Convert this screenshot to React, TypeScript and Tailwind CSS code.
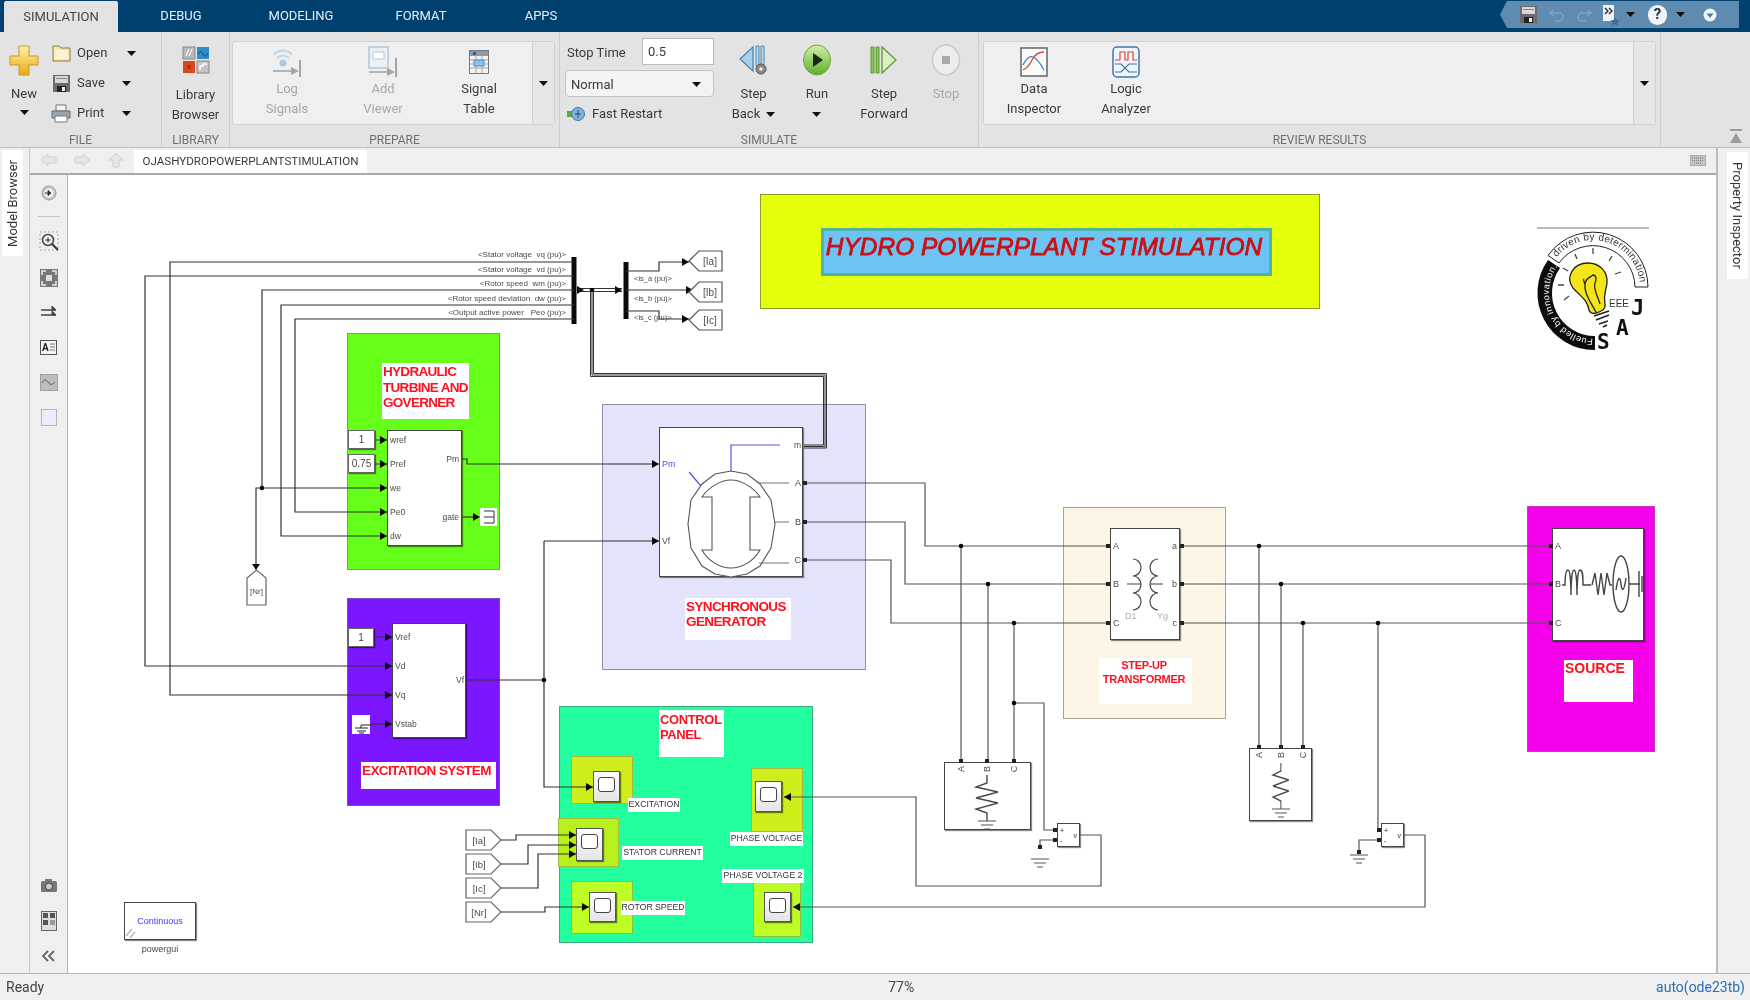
import React from "react";

const OX = 68;
const OY = 175;

// canvas nodes keep the picture's page coordinates, converted here
const at = (x: number, y: number, w: number, h: number): React.CSSProperties => ({
  left: x - OX,
  top: y - OY,
  width: w,
  height: h,
});

const Caret = ({ className = "" }: { className?: string }) => (
  <svg width="9" height="5" viewBox="0 0 9 5" className={className}>
    <path d="M0 0h9L4.500 5z" fill="#111" />
  </svg>
);

/* ribbon icons */
const NewIcon = () => (
  <svg width="30" height="32" viewBox="0 0 30 32">
    <defs>
      <linearGradient id="ng" x1="0" y1="0" x2="0" y2="1">
        <stop offset="0" stopColor="#fff3a0" />
        <stop offset="1" stopColor="#e8a818" />
      </linearGradient>
    </defs>
    <path d="M10 2h10v10h9v9h-9v10H10V21H1v-9h9z" fill="url(#ng)" stroke="#c99a2a" />
  </svg>
);
const OpenIcon = () => (
  <svg width="19" height="19" viewBox="0 0 19 19">
    <path d="M1 2h6l2 2h9v13H1z" fill="#f4e6ae" stroke="#8a7a4a" />
    <path d="M3 6h13v9H3z" fill="#fbf3cf" />
  </svg>
);
const SaveIcon = ({ size = 19 }: { size?: number }) => (
  <svg width={size} height={size} viewBox="0 0 19 19">
    <path d="M1 1h17v17H1z" fill="#6b6b6b" />
    <path d="M3 2h13v7H3z" fill="#d8d8d8" />
    <path d="M4 4h11v1H4z" fill="#888" />
    <path d="M5 12h9v6H5z" fill="#222" />
    <path d="M10 13h3v4h-3z" fill="#eee" />
  </svg>
);
const PrintIcon = () => (
  <svg width="20" height="19" viewBox="0 0 20 19">
    <path d="M5 1h10v6H5z" fill="#f4f4f4" stroke="#777" />
    <path d="M1 7h18v7H1z" fill="#9aa5ae" stroke="#66707a" />
    <path d="M4 12h12v6H4z" fill="#fff" stroke="#777" />
  </svg>
);
const LibraryIcon = () => (
  <svg width="28" height="28" viewBox="0 0 28 28">
    <rect x="1" y="1" width="12" height="12" fill="#b9b9b9" stroke="#888" />
    <path d="M4 10l3-7M7 10l3-7" stroke="#fff" />
    <rect x="15" y="1" width="12" height="12" fill="#2f8fc4" />
    <path d="M16 8q3-5 5 0t5-1" stroke="#0b4f7c" fill="none" />
    <rect x="1" y="15" width="12" height="12" fill="#d8481c" />
    <rect x="5" y="19" width="4" height="4" fill="#b33510" />
    <rect x="15" y="15" width="12" height="12" fill="#c4c4c4" stroke="#888" />
    <path d="M18 24v-4h3v-2h4" stroke="#fff" fill="none" strokeWidth="1.5" />
  </svg>
);
const LogIcon = () => (
  <svg width="30" height="32" viewBox="0 0 30 32">
    <circle cx="11" cy="17" r="3.500" fill="#a9cbe6" />
    <path d="M5 12q6-5 12 0M2 8q9-7 18 0" stroke="#bcd6ea" strokeWidth="2" fill="none" />
    <path d="M1 25h18" stroke="#b5b5b5" strokeWidth="2" />
    <path d="M19 21l8 4-8 4z" fill="#a5a5a5" />
    <path d="M28 14v17" stroke="#a5a5a5" strokeWidth="2" />
  </svg>
);
const ViewerIcon = () => (
  <svg width="30" height="32" viewBox="0 0 30 32">
    <rect x="1" y="1" width="19" height="21" fill="#e9f0f6" stroke="#b5c8d8" strokeWidth="1.500" />
    <rect x="5" y="6" width="11" height="7" rx="1" fill="#fff" stroke="#b8c4cc" />
    <path d="M1 26h18" stroke="#b5b5b5" strokeWidth="2" />
    <path d="M19 22l8 4-8 4z" fill="#a5a5a5" />
    <path d="M28 12v19" stroke="#a5a5a5" strokeWidth="2" />
  </svg>
);
const TableIcon = () => (
  <svg width="20" height="24" viewBox="0 0 20 24">
    <rect x="0.500" y="0.500" width="19" height="23" fill="#f2f2f2" stroke="#777" />
    <rect x="1" y="1" width="18" height="5" fill="#8d99a3" />
    <rect x="4" y="2" width="3" height="3" fill="#1d5fa8" />
    <path d="M1 10h18M1 14h18M1 18h18M7 6v17M13 6v17" stroke="#aaa" />
    <rect x="5" y="10" width="10" height="6" fill="#8ec1ee" stroke="#4d8fcb" />
  </svg>
);
const StepBackIcon = () => (
  <svg width="30" height="32" viewBox="0 0 30 32">
    <path d="M14 3v24L1 15z" fill="#a9d0ec" stroke="#4b86b4" strokeWidth="1.300" />
    <path d="M17 2h3v20h-3zM22 2h3v20h-3z" fill="#b9d6ea" stroke="#4b86b4" />
    <circle cx="22" cy="25" r="5" fill="#8a8a8a" stroke="#555" />
    <circle cx="22" cy="25" r="1.800" fill="#eee" />
  </svg>
);
const RunIcon = () => (
  <svg width="30" height="34" viewBox="0 0 30 34">
    <defs>
      <linearGradient id="rg" x1="0" y1="0" x2="0" y2="1">
        <stop offset="0" stopColor="#d4eea8" />
        <stop offset="1" stopColor="#5fae2c" />
      </linearGradient>
    </defs>
    <ellipse cx="15" cy="17" rx="13.500" ry="15" fill="url(#rg)" stroke="#6aa83a" />
    <path d="M11 10l10 7-10 7z" fill="#1c2a12" />
  </svg>
);
const StepFwdIcon = () => (
  <svg width="28" height="30" viewBox="0 0 28 30">
    <path d="M1 2h3v26H1zM6 2h3v26H6z" fill="#8cc65a" stroke="#5d9a34" />
    <path d="M12 2v26l14-13z" fill="#dcefc6" stroke="#5d9a34" strokeWidth="1.300" />
  </svg>
);
const StopIcon = () => (
  <svg width="30" height="34" viewBox="0 0 30 34">
    <ellipse cx="15" cy="17" rx="13.500" ry="15" fill="#ededed" stroke="#c9c9c9" strokeWidth="1.500" />
    <rect x="11" y="13" width="8" height="8" fill="#a8a8a8" />
  </svg>
);
const DataIcon = () => (
  <svg width="28" height="30" viewBox="0 0 28 30">
    <rect x="1" y="1" width="26" height="28" fill="#fafafa" stroke="#666" strokeWidth="1.500" />
    <path d="M3 23q5-2 9-10t12-8" stroke="#d8483a" fill="none" strokeWidth="1.300" />
    <path d="M3 18q5-10 10-8t11 13" stroke="#3c7fc4" fill="none" strokeWidth="1.300" />
  </svg>
);
const LogicIcon = () => (
  <svg width="28" height="32" viewBox="0 0 28 32">
    <rect x="1" y="1" width="26" height="30" rx="4" fill="#eef4fa" stroke="#3f78ad" strokeWidth="1.500" />
    <path d="M3 14h5V6h5v8h3V6h5v8h4" stroke="#d8483a" fill="none" strokeWidth="1.200" />
    <path d="M3 18h6l8 8h8M3 26h6l8-8h8" stroke="#3f78ad" fill="none" strokeWidth="1.200" />
  </svg>
);
const FastIcon = () => (
  <svg width="18" height="16" viewBox="0 0 18 16">
    <path d="M0 5h6v6H0z" fill="#5fa83c" />
    <circle cx="11" cy="8" r="6.500" fill="#7fb2d8" stroke="#3f78ad" />
    <path d="M11 4v8M8 8h6" stroke="#1f4f78" />
  </svg>
);

const SmallBtn = ({ icon, label, caretGap }: { icon: React.ReactNode; label: string; caretGap: string }) => (
  <div className="flex h-[30px] items-center">
    <div className="flex w-[24px] justify-center">{icon}</div>
    <span className="ml-[4px] w-[38px]">{label}</span>
    <Caret className={caretGap} />
  </div>
);

const Stack = ({ icon, lines, gray = false }: { icon: React.ReactNode; lines: string[]; gray?: boolean }) => (
  <div className={`flex w-[92px] flex-col items-center ${gray ? "text-[#a8a8a8]" : ""}`}>
    <div className="flex h-[32px] items-center">{icon}</div>
    <div className="mt-[1px] text-center leading-[20px]">
      {lines.map((l) => (
        <div key={l}>{l}</div>
      ))}
    </div>
  </div>
);

const SimBtn = ({ w, icon, lines, gray = false }: { w: string; icon: React.ReactNode; lines: React.ReactNode[]; gray?: boolean }) => (
  <div className={`flex flex-col items-center ${w} ${gray ? "text-[#a8a8a8]" : ""}`}>
    <div className="flex h-[36px] items-center">{icon}</div>
    <div className="mt-[6px] text-center leading-[20px]">
      {lines.map((l, i) => (
        <div key={i} className="flex h-[20px] items-center justify-center gap-[6px]">
          {l}
        </div>
      ))}
    </div>
  </div>
);

const Section = ({ w, label, children }: { w: string; label: string; children: React.ReactNode }) => (
  <section className={`flex shrink-0 flex-col border-r border-[#cdcdcd] ${w}`}>
    <div className="h-[100px]">{children}</div>
    <div className="h-[15px] text-center text-[12px] leading-[17px] text-[#6f6f6f]">{label}</div>
  </section>
);

const Ribbon = () => (
  <div className="flex h-[116px] shrink-0 border-b border-[#bdbdbd] bg-[#e3e3e3] text-[13px] text-[#3a3a3a]">
    <Section w="w-[162px]" label="FILE">
      <div className="flex">
        <div className="ml-[8px] flex w-[32px] flex-col items-center pt-[12px]">
          <NewIcon />
          <div className="mt-[8px] leading-[20px]">New</div>
          <Caret className="mt-[6px]" />
        </div>
        <div className="ml-[9px] pt-[6px]">
          <SmallBtn icon={<OpenIcon />} label="Open" caretGap="ml-[12px]" />
          <SmallBtn icon={<SaveIcon />} label="Save" caretGap="ml-[7px]" />
          <SmallBtn icon={<PrintIcon />} label="Print" caretGap="ml-[7px]" />
        </div>
      </div>
    </Section>
    <Section w="w-[68px]" label="LIBRARY">
      <div className="flex flex-col items-center pt-[14px]">
        <LibraryIcon />
        <div className="mt-[11px] text-center leading-[20px]">
          Library
          <br />
          Browser
        </div>
      </div>
    </Section>
    <Section w="w-[330px]" label="PREPARE">
      <div className="ml-[2px] mt-[9px] flex h-[84px] w-[323px] rounded-[3px] border border-[#d2d2d2] bg-[#efefef] pl-[6px] pt-[4px]">
        <div className="flex [&>div]:w-[96px]">
          <Stack gray icon={<LogIcon />} lines={["Log", "Signals"]} />
          <Stack gray icon={<ViewerIcon />} lines={["Add", "Viewer"]} />
          <Stack icon={<TableIcon />} lines={["Signal", "Table"]} />
        </div>
        <div className="-mt-[4px] ml-auto flex w-[22px] items-center justify-center border-l border-[#d2d2d2] bg-[#e6e6e6]">
          <Caret />
        </div>
      </div>
    </Section>
    <Section w="w-[419px]" label="SIMULATE">
      <div className="flex">
        <div className="ml-[5px] w-[149px] pt-[6px]">
          <div className="flex h-[27px] items-center">
            <span className="ml-[2px] mt-[2px]">Stop Time</span>
            <div className="ml-auto flex h-[27px] w-[72px] items-center border border-[#bbbbbb] bg-white pl-[5px]">0.5</div>
          </div>
          <div className="mt-[5px] flex h-[27px] items-center justify-between rounded-[4px] border border-[#c4c4c4] bg-[#f3f3f3] px-[5px] pt-[2px]">
            Normal
            <Caret className="mr-[7px]" />
          </div>
          <div className="mt-[7px] flex h-[20px] items-center gap-[7px] pl-[2px]">
            <FastIcon />
            Fast Restart
          </div>
        </div>
        <div className="ml-[8px] flex pt-[10px]">
          <SimBtn w="w-[63px]" icon={<StepBackIcon />} lines={["Step", <>Back <Caret /></>]} />
          <SimBtn w="w-[64px]" icon={<RunIcon />} lines={["Run", <Caret />]} />
          <SimBtn w="w-[70px]" icon={<StepFwdIcon />} lines={["Step", "Forward"]} />
          <SimBtn w="w-[54px]" gray icon={<StopIcon />} lines={["Stop"]} />
        </div>
      </div>
    </Section>
    <Section w="w-[682px]" label="REVIEW RESULTS">
      <div className="ml-[4px] mt-[9px] flex h-[84px] w-[673px] rounded-[3px] border border-[#d2d2d2] bg-[#efefef] pl-[4px] pt-[4px]">
        <Stack icon={<DataIcon />} lines={["Data", "Inspector"]} />
        <Stack icon={<LogicIcon />} lines={["Logic", "Analyzer"]} />
        <div className="-mt-[4px] ml-auto flex w-[22px] items-center justify-center border-l border-[#d2d2d2] bg-[#e6e6e6]">
          <Caret />
        </div>
      </div>
    </Section>
    <div className="flex flex-1 items-end justify-end pb-[3px] pr-[7px]">
      <svg width="14" height="15" viewBox="0 0 14 15">
        <path d="M1 1h12" stroke="#9a9a9a" strokeWidth="2" />
        <path d="M7 4l6 10H1z" fill="#9a9a9a" />
      </svg>
    </div>
  </div>
);

const TitleBar = () => (
  <div className="flex h-[32px] shrink-0 bg-[#00406f] text-[13px] text-[#e6eef5]">
    <div className="ml-[4px] mt-px flex w-[114px] items-center justify-center rounded-t-[2px] bg-[#e3e3e3] text-[#444]">SIMULATION</div>
    <div className="ml-[3px] flex">
      {["DEBUG", "MODELING", "FORMAT", "APPS"].map((t) => (
        <div key={t} className="flex w-[120px] items-center justify-center">
          {t}
        </div>
      ))}
    </div>
    <div className="ml-auto mr-[11px] mt-px flex h-[27px] w-[239px] items-center bg-[#5f8bb0] [clip-path:polygon(7px_0,100%_0,100%_100%,7px_100%,0_50%)]">
      <div className="ml-[19px] flex">
        <SaveIcon />
      </div>
      <svg width="16" height="16" viewBox="0 0 16 16" className="ml-[11px]">
        <path d="M5 3L1 6l4 3M1 6h9a4 4 0 0 1 0 8H6" stroke="#7fa4c4" strokeWidth="1.500" fill="none" />
      </svg>
      <svg width="16" height="16" viewBox="0 0 16 16" className="ml-[11px]">
        <path d="M11 3l4 3-4 3M15 6H6a4 4 0 0 0 0 8h4" stroke="#7fa4c4" strokeWidth="1.500" fill="none" />
      </svg>
      <svg width="18" height="22" viewBox="0 0 18 22" className="ml-[10px]">
        <path d="M1 1h11v16H1z" fill="#eef2f5" />
        <path d="M3 4l3 3-3 3M7 4l3 3-3 3" stroke="#222" strokeWidth="1.300" fill="none" />
        <path d="M13 13l1.500 3 3 .5-2 2 .5 3-3-1.500-3 1.500.5-3-2-2 3-.5z" fill="#3f6f96" />
      </svg>
      <Caret className="ml-[6px]" />
      <div className="ml-[13px] flex h-[20px] w-[19px] items-center justify-center rounded-full bg-[#f2f5f8] text-[15px] font-bold leading-none text-[#234]">?</div>
      <Caret className="ml-[9px]" />
      <svg width="14" height="14" viewBox="0 0 14 14" className="ml-[18px]">
        <circle cx="7" cy="7" r="6.500" fill="#f2f5f8" />
        <path d="M3.500 5.500h7L7 10z" fill="#4f7ca2" />
      </svg>
    </div>
  </div>
);

/* canvas */
type BoxDef = { x: number; y: number; w: number; h: number; c: string };
const panels: BoxDef[] = [
  { x: 760, y: 194, w: 560, h: 115, c: "bg-[#e6ff0a] border-[#8d9a2a]" },
  { x: 347, y: 333, w: 153, h: 237, c: "bg-[#66ff1a] border-[#5cb53a]" },
  { x: 347, y: 598, w: 153, h: 208, c: "bg-[#7b16ff] border-[#7a4bc4]" },
  { x: 602, y: 404, w: 264, h: 266, c: "bg-[#e3e3fb] border-[#8f8fa8]" },
  { x: 1063, y: 507, w: 163, h: 212, c: "bg-[#fdf5e6] border-[#a8a296]" },
  { x: 1527, y: 506, w: 128, h: 246, c: "bg-[#f500ea] border-[#c43abb]" },
  { x: 559, y: 706, w: 254, h: 237, c: "bg-[#22ff9e] border-[#3aa87a]" },
  { x: 571, y: 756, w: 62, h: 48, c: "bg-[#d0ec1a] border-[#a8b63a]" },
  { x: 558, y: 818, w: 61, h: 49, c: "bg-[#b8f01e] border-[#9cc23a]" },
  { x: 571, y: 881, w: 62, h: 53, c: "bg-[#bdfc24] border-[#8fbf3a]" },
  { x: 751, y: 768, w: 52, h: 64, c: "bg-[#d0ec1a] border-[#a8b63a]" },
  { x: 753, y: 880, w: 48, h: 57, c: "bg-[#bdfc24] border-[#8fbf3a]" },
];

const blocks: BoxDef[] = [
  { x: 387, y: 430, w: 75, h: 116, c: "" },
  { x: 392, y: 623, w: 74, h: 115, c: "" },
  { x: 659, y: 427, w: 144, h: 150, c: "" },
  { x: 1110, y: 528, w: 70, h: 112, c: "" },
  { x: 1552, y: 528, w: 92, h: 113, c: "" },
  { x: 944, y: 762, w: 87, h: 68, c: "" },
  { x: 1249, y: 748, w: 63, h: 73, c: "" },
  { x: 1057, y: 823, w: 23, h: 24, c: "" },
  { x: 1381, y: 823, w: 23, h: 24, c: "" },
  { x: 124, y: 902, w: 72, h: 38, c: "" },
];

const constants = [
  { x: 348, y: 430, w: 27, h: 19, t: "1" },
  { x: 348, y: 454, w: 27, h: 19, t: "0.75" },
  { x: 348, y: 628, w: 26, h: 19, t: "1" },
];

const scopes = [
  { x: 593, y: 771, h: 31 },
  { x: 576, y: 828, h: 33 },
  { x: 589, y: 892, h: 30 },
  { x: 755, y: 781, h: 31 },
  { x: 764, y: 892, h: 30 },
];

const redLabels = [
  { x: 382, y: 363, w: 87, h: 56, l: ["HYDRAULIC", "TURBINE AND", "GOVERNER"], s: "text-[13.5px] tracking-[-0.7px] leading-[15.5px] pl-px pt-px" },
  { x: 361, y: 762, w: 135, h: 27, l: ["EXCITATION SYSTEM"], s: "text-[13.5px] tracking-[-0.6px] leading-[15.5px] pl-px pt-px" },
  { x: 685, y: 598, w: 106, h: 42, l: ["SYNCHRONOUS", "GENERATOR"], s: "text-[13.5px] tracking-[-0.6px] leading-[15px] pl-px pt-px" },
  { x: 1099, y: 658, w: 93, h: 46, l: ["STEP-UP", "TRANSFORMER"], s: "text-[11px] tracking-[-0.3px] leading-[14px] text-center pr-[3px]" },
  { x: 1564, y: 660, w: 69, h: 42, l: ["SOURCE"], s: "text-[14px] leading-[16px] pl-px" },
  { x: 659, y: 710, w: 65, h: 47, l: ["CONTROL", "PANEL"], s: "text-[13px] tracking-[-0.4px] leading-[15px] pl-px pt-[2px]" },
];

const scopeLabels = [
  { x: 628, y: 798, w: 52, t: "EXCITATION" },
  { x: 622, y: 846, w: 81, t: "STATOR CURRENT" },
  { x: 621, y: 901, w: 64, t: "ROTOR SPEED" },
  { x: 730, y: 832, w: 73, t: "PHASE VOLTAGE" },
  { x: 722, y: 869, w: 82, t: "PHASE VOLTAGE 2" },
];

const signalWires = [
  "M574 262H170V695H392",
  "M574 276H145V666H392",
  "M574 290H262V488",
  "M574 305H281V536H387",
  "M574 319H295V512H387",
  "M387 488H256V569",
  "M375 440H387M375 464H387M374 637H392M370 724H392",
  "M462 459H467V464H659",
  "M462 517H476",
  "M466 680H544M544 541H659M544 541V787H593",
  "M626 271H659V262H689M626 290H693M626 311H659V319H689",
  "M501 840H516V835H576M501 864H528V845H576M501 888H538V854H576M501 912H545V907H589",
];

const powerWires = [
  "M803 483H925V546H1107",
  "M803 522H905V584H1107",
  "M803 560H891V623H1107",
  "M1180 546H1552M1180 584H1552M1180 623H1552",
  "M961 546V762M988 584V762M1014 623V762",
  "M1259 546V748M1281 584V748M1303 623V748",
  "M1014 703H1044V830H1057M1057 840H1040V848",
  "M1378 623V830H1381M1381 840H1359V850",
  "M1080 835H1101V886H916V797H784",
  "M1404 835H1425V907H793",
];

const arrows: [number, number][] = [
  [387, 440], [387, 464], [387, 488], [387, 512], [387, 536],
  [392, 637], [392, 666], [392, 695], [392, 724],
  [659, 464], [659, 541], [622, 290], [689, 262], [693, 290], [689, 319], [480, 517],
  [593, 787], [576, 835], [576, 845], [576, 854], [589, 907],
];
const dots: [number, number][] = [
  [262, 488], [544, 680], [592, 290], [961, 546], [988, 584], [1014, 623], [1014, 703],
  [1259, 546], [1281, 584], [1303, 623], [1378, 623],
];
const ports: [number, number][] = [
  [805, 483], [805, 522], [805, 560], [1108, 546], [1108, 584], [1108, 623], [1182, 546], [1182, 584], [1182, 623],
  [1551, 546], [1551, 584], [1551, 623], [961, 761], [987, 761], [1014, 761], [1259, 747], [1281, 747], [1303, 747],
  [1055, 830], [1055, 840], [1379, 830], [1379, 840], [1040, 847], [1359, 852],
];

const T = ({ x, y, s = 8.500, c = "#4a4a4a", a = "start", rot, children }: { x: number; y: number; s?: number; c?: string; a?: "start" | "middle" | "end"; rot?: number; children: React.ReactNode }) => (
  <text x={x} y={y} fontSize={s} fill={c} textAnchor={a} dominantBaseline="central" className="whitespace-pre" transform={rot ? `rotate(${rot} ${x} ${y})` : undefined}>
    {children}
  </text>
);

const Ground = ({ x, y }: { x: number; y: number }) => (
  <path d={`M${x - 9} ${y}h18M${x - 6} ${y + 4}h12M${x - 3} ${y + 8}h6`} stroke="#555" strokeWidth="1.100" fill="none" />
);

const Load = ({ x, y }: { x: number; y: number }) => (
  <g fill="none" stroke="#4a4a4a" strokeWidth="1.400">
    <path d={`M${x} ${y}v8l-11 4 22 5-22 6 22 5-22 6 11 4v8`} />
  </g>
);

const Logo = () => (
  <g>
    <path d="M1537 228H1649" stroke="#777" strokeWidth="1.200" />
    <path d="M1595 350A57 57 0 0 1 1548 260L1560 268A43 43 0 0 0 1595 336Z" fill="#0c0c0c" />
    <path d="M1548 255.500A55 55 0 0 1 1648 287H1635A42 42 0 0 0 1559 263Z" fill="#fff" stroke="#222" />
    <path id="lgA" d="M1595 339A46 46 0 0 1 1557 267" fill="none" />
    <path id="lgB" d="M1556 258A47 47 0 0 1 1640 287" fill="none" />
    <text fontSize="9" fill="#fff" letterSpacing="0.500">
      <textPath href="#lgA" startOffset="2">Fuelled by innovation.</textPath>
    </text>
    <text fontSize="10" fill="#333" letterSpacing="0.300">
      <textPath href="#lgB" startOffset="1">driven by determination</textPath>
    </text>
    <path d="M1588 263c12 0 20 9 19 20-1 8-4 11-2 22 1 4-2 6-9 8-4 1-6 0-7-3-2-11-8-13-16-22-8-11 0-25 15-25z" fill="#f4e51a" stroke="#222" strokeWidth="1.300" />
    <path d="M1596 312c-5-9-12-19-11-28 1-7 5-6 8-9 3 0 4 4 2 8-2 6 3 14 5 21M1585 284c-1-2-2-4-1-5" fill="none" stroke="#222" strokeWidth="1.300" />
    <path d="M1594 316l15-5M1596 320l13-5M1599 324l9-3M1603 327l4-2" stroke="#222" strokeWidth="1.600" />
    <path d="M1593 248v6M1575 254l2 5M1612 256l-3 5M1563 268l5 3M1615 274l6-2M1558 285h6M1564 300l5-4" stroke="#444" strokeWidth="1.300" />
    <T x={1609} y={303} s={10} c="#333">EEE</T>
    <text x={1631} y={315} fontSize="22" fontWeight="700" fill="#111" className="[font-family:'DejaVu_Sans_Mono',monospace]">J</text>
    <text x={1616} y={335} fontSize="21" fontWeight="700" fill="#111" className="[font-family:'DejaVu_Sans_Mono',monospace]">A</text>
    <text x={1597} y={349} fontSize="21" fontWeight="700" fill="#111" className="[font-family:'DejaVu_Sans_Mono',monospace]">S</text>
  </g>
);

const Wires = () => (
  <svg className="absolute inset-0 [font-family:'Liberation_Sans',sans-serif]" width="1648" height="798" viewBox={`${OX} ${OY} 1648 798`}>
    {/* buses */}
    <path d="M574 257V324M626 262V319" stroke="#0a0a0a" strokeWidth="5" />
    {/* triple mux line */}
    <g fill="none" stroke="#333">
      <path d="M578 288.500H622M578 291.500H622" strokeWidth="1" />
      <path d="M590.500 290V376.500H823.500V445H804M593.500 290V373.500H826.500V448H804M592 290V375H825V446.500H804" strokeWidth="1" />
    </g>
    <path d="M584 290l-7-4v8z" fill="#111" />
    <g fill="none" stroke="#333" strokeWidth="1.200">
      {signalWires.map((d) => (
        <path key={d} d={d} />
      ))}
    </g>
    <g fill="none" stroke="#555" strokeWidth="1.200">
      {powerWires.map((d) => (
        <path key={d} d={d} />
      ))}
    </g>
    {arrows.map(([x, y]) => (
      <path key={`a${x}-${y}`} d={`M${x} ${y}l-7-4v8z`} fill="#0a0a0a" />
    ))}
    <path d="M256 570l-4-6h8z" fill="#0a0a0a" />
    <path d="M784 797l7-4v8zM793 907l7-4v8z" fill="#0a0a0a" />
    {dots.map(([x, y]) => (
      <circle key={`d${x}-${y}`} cx={x} cy={y} r="2.300" fill="#0a0a0a" />
    ))}
    {ports.map(([x, y]) => (
      <rect key={`p${x}-${y}`} x={x - 2} y={y - 2} width="4" height="4" fill="#222" />
    ))}

    {/* signal names */}
    <T x={566} y={254} s={8} a="end">{"<Stator voltage  vq (pu)>"}</T>
    <T x={566} y={269} s={8} a="end">{"<Stator voltage  vd (pu)>"}</T>
    <T x={566} y={283} s={8} a="end">{"<Rotor speed  wm (pu)>"}</T>
    <T x={566} y={298} s={8} a="end">{"<Rotor speed deviation  dw (pu)>"}</T>
    <T x={566} y={312} s={8} a="end">{"<Output active power   Peo (pu)>"}</T>
    <T x={634} y={278} s={7.500}>{"<is_a (pu)>"}</T>
    <T x={634} y={298} s={7.500}>{"<is_b (pu)>"}</T>
    <T x={634} y={317} s={7.500}>{"<is_c (pu)>"}</T>

    {/* goto and from tags */}
    {[[251, "[Ia]"], [282, "[Ib]"], [310, "[Ic]"]].map(([y, t]) => (
      <g key={t as string}>
        <path d={`M689 ${(y as number) + 10}L699 ${y}H722V${(y as number) + 20}H699Z`} fill="#fff" stroke="#555" strokeWidth="1.200" />
        <T x={710} y={(y as number) + 10} s={10} a="middle">{t}</T>
      </g>
    ))}
    {[[830, "[Ia]"], [854, "[Ib]"], [878, "[Ic]"], [902, "[Nr]"]].map(([y, t]) => (
      <g key={t as string}>
        <path d={`M466 ${y}H491L501 ${(y as number) + 10}L491 ${(y as number) + 20}H466Z`} fill="#fff" stroke="#666" strokeWidth="1.200" />
        <T x={479} y={(y as number) + 10} s={9.500} a="middle">{t}</T>
      </g>
    ))}
    <path d="M247 605V578L256.500 570L266 578V605Z" fill="#fff" stroke="#666" strokeWidth="1.200" />
    <T x={256.500} y={591} s={8} a="middle">[Nr]</T>

    {/* turbine ports */}
    <T x={390} y={440}>wref</T>
    <T x={390} y={464}>Pref</T>
    <T x={390} y={488}>we</T>
    <T x={390} y={512}>Pe0</T>
    <T x={390} y={536}>dw</T>
    <T x={459} y={459} a="end">Pm</T>
    <T x={459} y={517} a="end">gate</T>
    <path d="M480 508h17v18h-17z" fill="#fff" />
    <path d="M484 511h10v12h-10M484 517h10" fill="none" stroke="#333" />

    {/* excitation ports */}
    <T x={395} y={637}>Vref</T>
    <T x={395} y={666}>Vd</T>
    <T x={395} y={695}>Vq</T>
    <T x={395} y={724}>Vstab</T>
    <T x={464} y={680} a="end">Vf</T>
    <path d="M352 715h18v19h-18z" fill="#fff" />
    <path d="M361 725h10M361 725v3M355 728h13M357 731h9M359 733h5" stroke="#222" fill="none" />

    {/* generator */}
    <path d="M731 471L747 474L760 484L771 500L775 524L771 548L760 566L747 574L731 577L715 574L702 566L691 548L688 524L691 500L702 484L715 474Z" fill="#fff" stroke="#555" strokeWidth="1.100" />
    <path d="M702 497C708 488 720 480 731 480C742 480 754 488 760 497H750V550H760C754 561 742 568 731 568C720 568 708 561 702 550H712V497Z" fill="#fff" stroke="#555" strokeWidth="1.100" />
    <path d="M731 471V445H780M689 472L701 486" stroke="#5555e0" strokeWidth="1.200" fill="none" />
    <path d="M759 483H789M775 522H789M759 563H789" stroke="#777" strokeWidth="1.100" />
    <T x={662} y={464} s={9} c="#5555e0">Pm</T>
    <T x={662} y={541}>Vf</T>
    <T x={801} y={445} s={8.500} a="end">m</T>
    <T x={801} y={483} s={9} a="end">A</T>
    <T x={801} y={522} s={9} a="end">B</T>
    <T x={801} y={560} s={9} a="end">C</T>

    {/* transformer */}
    <g fill="none" stroke="#444" strokeWidth="1.200">
      <path d="M1133 559a8 8.500 0 0 1 0 17a8 8.500 0 0 1 0 17a8 8.500 0 0 1 0 17" />
      <path d="M1158 559a8 8.500 0 0 0 0 17a8 8.500 0 0 0 0 17a8 8.500 0 0 0 0 17" />
      <path d="M1127 584h14M1150 584h13" />
    </g>
    <T x={1113} y={546} s={9}>A</T>
    <T x={1113} y={584} s={9}>B</T>
    <T x={1113} y={623} s={9}>C</T>
    <T x={1177} y={546} s={9} a="end">a</T>
    <T x={1177} y={584} s={9} a="end">b</T>
    <T x={1177} y={623} s={9} a="end">c</T>
    <T x={1125} y={616} s={9} c="#b0b0b0">D1</T>
    <T x={1157} y={616} s={9} c="#b0b0b0">Yg</T>

    {/* three-phase source */}
    <T x={1555} y={546} s={9}>A</T>
    <T x={1555} y={584} s={9}>B</T>
    <T x={1555} y={623} s={9}>C</T>
    <g fill="none" stroke="#444" strokeWidth="1.400">
      <path d="M1562 585h3c0-6 0-15 3-15s3 25 3 25 0-25 3-25 3 25 3 25 0-25 3-25 3 6 3 15h8" />
      <path d="M1592 585l3-12 3 22 3-22 3 22 3-22 3 12h2" />
      <ellipse cx="1621" cy="584" rx="8" ry="28" />
      <path d="M1616 590c2-14 4-14 5-6s3 8 5-6" />
      <path d="M1629 584h11M1639 571v26M1642 576v16" />
    </g>

    {/* loads */}
    <T x={961} y={769} s={9} rot={-90} a="middle">A</T>
    <T x={987} y={769} s={9} rot={-90} a="middle">B</T>
    <T x={1014} y={769} s={9} rot={-90} a="middle">C</T>
    <Load x={987} y={775} />
    <Ground x={987} y={821} />
    <T x={1259} y={755} s={9} rot={-90} a="middle">A</T>
    <T x={1281} y={755} s={9} rot={-90} a="middle">B</T>
    <T x={1303} y={755} s={9} rot={-90} a="middle">C</T>
    <g transform="scale(0.72 1) translate(498 -12)">
      <Load x={1281} y={775} />
    </g>
    <Ground x={1281} y={809} />

    {/* voltmeters */}
    {[1057, 1381].map((x) => (
      <g key={x}>
        <T x={x + 3} y={830} s={7} c="#222">+</T>
        <T x={x + 3} y={840} s={7} c="#222">-</T>
        <T x={x + 20} y={835} s={7} c="#333" a="end">v</T>
      </g>
    ))}
    <Ground x={1040} y={859} />
    <Ground x={1359} y={855} />

    <Logo />

    {/* powergui */}
    <T x={160} y={921} s={9} c="#3a3af0" a="middle">Continuous</T>
    <T x={160} y={949} s={9} a="middle">powergui</T>
    <path d="M126 936l6-7M130 938l5-6" stroke="#b5b5b5" strokeWidth="1.300" />
  </svg>
);

const Diagram = () => (
  <div className="relative min-w-0 flex-1 overflow-hidden bg-white [font-family:'Liberation_Sans',sans-serif]">
    {panels.map((p) => (
      <div key={`${p.x}-${p.y}`} className={`absolute border ${p.c}`} style={at(p.x, p.y, p.w, p.h)} />
    ))}
    {blocks.map((b) => (
      <div key={`${b.x}-${b.y}`} className="absolute border border-[#444] bg-white shadow-[1px_1px_1px_rgba(0,0,0,0.45)]" style={at(b.x, b.y, b.w, b.h)} />
    ))}
    {constants.map((c) => (
      <div key={`${c.x}-${c.y}`} className="absolute flex items-center justify-center border border-[#666] bg-white text-[10px] text-[#444] shadow-[1px_1px_1px_rgba(0,0,0,0.5)]" style={at(c.x, c.y, c.w, c.h)}>
        {c.t}
      </div>
    ))}
    {scopes.map((s) => (
      <div key={s.x} className="absolute border border-[#555] bg-gradient-to-b from-white to-[#e4e4e4] px-[4px] pt-[5px] shadow-[1px_1px_1px_rgba(0,0,0,0.5)]" style={at(s.x, s.y, 27, s.h)}>
        <div className="h-[15px] rounded-[3px] border border-[#444] bg-white" />
      </div>
    ))}
    <Wires />
    <div className="absolute flex items-center justify-center border-[3px] border-[#4db6a0] bg-[#6ec3f5] pb-[10px] pr-[5px]" style={at(821, 228, 451, 48)}>
      <span className="whitespace-nowrap text-[24.5px] italic text-[#cc0f12] [-webkit-text-stroke:0.8px_#cc0f12]">HYDRO POWERPLANT STIMULATION</span>
    </div>
    {redLabels.map((l) => (
      <div key={l.l[0]} className={`absolute bg-white font-bold text-[#ff1020] ${l.s}`} style={at(l.x, l.y, l.w, l.h)}>
        {l.l.map((t) => (
          <div key={t} className="whitespace-nowrap">
            {t}
          </div>
        ))}
      </div>
    ))}
    {scopeLabels.map((l) => (
      <div key={l.t} className="absolute flex items-center justify-center whitespace-nowrap bg-white text-[8.7px] text-[#333]" style={at(l.x, l.y, l.w, 14)}>
        {l.t}
      </div>
    ))}
  </div>
);

const ToolRail = () => (
  <div className="flex w-[38px] shrink-0 flex-col items-center border-r border-[#b5b5b5] bg-[#efefef] pt-[10px]">
    <svg width="16" height="16" viewBox="0 0 16 16">
      <circle cx="8" cy="8" r="7" fill="#c9c9c9" stroke="#999" />
      <circle cx="8" cy="8" r="4.500" fill="#f1f1f1" />
      <path d="M4 8h5M7 5.500L10 8l-3 2.500z" stroke="#333" fill="#333" />
    </svg>
    <div className="mt-[15px] h-px w-[22px] bg-[#c4c4c4]" />
    <svg width="20" height="21" viewBox="0 0 20 21" className="mt-[14px]">
      <rect x="1" y="1" width="18" height="18" fill="none" stroke="#aaa" strokeDasharray="2 2" />
      <circle cx="9" cy="9" r="5.500" fill="#eee" stroke="#444" strokeWidth="1.500" />
      <path d="M13 13l6 6" stroke="#333" strokeWidth="2" />
      <path d="M6.500 9h5M9 6.500v5" stroke="#222" />
    </svg>
    <svg width="18" height="18" viewBox="0 0 18 18" className="mt-[17px]">
      <rect width="18" height="18" fill="#777" />
      <path d="M2 6V2h4M12 2h4v4M16 12v4h-4M6 16H2v-4" stroke="#eee" strokeWidth="1.500" fill="none" />
      <rect x="6" y="6" width="6" height="6" fill="#ddd" />
    </svg>
    <svg width="18" height="14" viewBox="0 0 18 14" className="mt-[18px]">
      <path d="M1 5h15M1 10h15" stroke="#444" strokeWidth="1.300" />
      <path d="M12 1l4 4-4 0zM12 6l4 4-4 0z" fill="#444" stroke="#444" />
    </svg>
    <svg width="17" height="15" viewBox="0 0 17 15" className="mt-[21px]">
      <rect x="0.500" y="0.500" width="16" height="14" fill="#f5f5f5" stroke="#555" />
      <text x="2" y="11" fontSize="10" fontWeight="700" fill="#222">A</text>
      <path d="M10 4h5M10 7h5M10 10h5" stroke="#777" />
    </svg>
    <svg width="18" height="17" viewBox="0 0 18 17" className="mt-[19px]">
      <rect width="18" height="17" fill="#bdbdbd" stroke="#888" />
      <path d="M2 9q3-6 6-1t7 0" stroke="#666" fill="none" />
    </svg>
    <div className="mt-[18px] h-[17px] w-[16px] border-[1.5px] border-[#b5b5b5] bg-[#ececfb]" />
    <svg width="18" height="15" viewBox="0 0 18 15" className="mt-auto">
      <rect x="1" y="3" width="16" height="11" rx="1.500" fill="#777" />
      <rect x="5" y="1" width="7" height="3" fill="#777" />
      <circle cx="9" cy="8.500" r="3.500" fill="#ccc" stroke="#444" />
    </svg>
    <svg width="16" height="20" viewBox="0 0 16 20" className="mt-[18px]">
      <rect x="0.500" y="0.500" width="15" height="19" fill="#ddd" stroke="#666" />
      <path d="M2 2h5v5H2zM9 2h5v5H9zM2 9h5v5H2z" fill="#555" />
      <path d="M9 9h5v5H9z" fill="#999" />
    </svg>
    <svg width="14" height="12" viewBox="0 0 14 12" className="mb-[11px] mt-[19px]">
      <path d="M6 1L1 6l5 5M12 1L7 6l5 5" stroke="#666" strokeWidth="1.800" fill="none" />
    </svg>
  </div>
);

const NavArrow = ({ d, ml }: { d: string; ml: string }) => (
  <svg width="18" height="16" viewBox="0 0 18 16" className={ml}>
    <path d={d} fill="#e6e6e6" stroke="#cfcfcf" />
  </svg>
);

const Workspace = () => (
  <div className="flex min-h-0 flex-1 bg-[#efefef]">
    <div className="w-[30px] shrink-0 border-r border-[#c9c9c9] pt-[2px]">
      <div className="ml-[2px] flex h-[106px] w-[21px] items-center justify-center bg-white text-[13px] text-[#333] [writing-mode:vertical-rl]">
        <span className="rotate-180 whitespace-nowrap">Model Browser</span>
      </div>
    </div>
    <div className="flex min-w-0 flex-1 flex-col">
      <div className="flex h-[27px] shrink-0 items-end border-b-2 border-[#a9a9a9]">
        <div className="flex h-[25px] items-center pb-[2px]">
          <NavArrow ml="ml-[10px]" d="M1 8l7-6v3h8v6H8v3z" />
          <NavArrow ml="ml-[15px]" d="M17 8l-7-6v3H2v6h8v3z" />
          <NavArrow ml="ml-[16px]" d="M9 1l7 7h-4v7H6V8H2z" />
        </div>
        <div className="ml-[9px] flex h-[23px] w-[233px] items-center justify-center bg-white text-[11.6px] text-[#3a3a3a]">OJASHYDROPOWERPLANTSTIMULATION</div>
        <svg width="16" height="11" viewBox="0 0 16 11" className="mb-[7px] ml-auto mr-[10px]">
          <rect width="16" height="11" fill="#c4c4c4" stroke="#999" />
          <path d="M2 3h12M2 5.500h12M4 8h8" stroke="#777" strokeDasharray="1 1" />
        </svg>
      </div>
      <div className="flex min-h-0 flex-1">
        <ToolRail />
        <Diagram />
      </div>
    </div>
    <div className="w-[34px] shrink-0 border-l-2 border-[#bdbdbd] pl-[9px] pt-[4px]">
      <div className="flex h-[127px] w-[21px] items-center justify-center bg-white text-[13px] text-[#333] [writing-mode:vertical-rl]">
        <span className="whitespace-nowrap">Property Inspector</span>
      </div>
    </div>
  </div>
);

export default function App() {
  return (
    <div className="flex h-[1000px] w-[1750px] flex-col overflow-hidden bg-[#efefef] blur-[0.4px] [font-family:Roboto,'Liberation_Sans',sans-serif]">
      <TitleBar />
      <Ribbon />
      <Workspace />
      <div className="flex h-[27px] shrink-0 items-center border-t border-[#b5b5b5] bg-[#f0f0f0] text-[14px] text-[#444]">
        <span className="ml-[6px]">Ready</span>
        <span className="ml-[844px]">77%</span>
        <span className="ml-auto mr-[5px] text-[#2a6fb0]">auto(ode23tb)</span>
      </div>
    </div>
  );
}
